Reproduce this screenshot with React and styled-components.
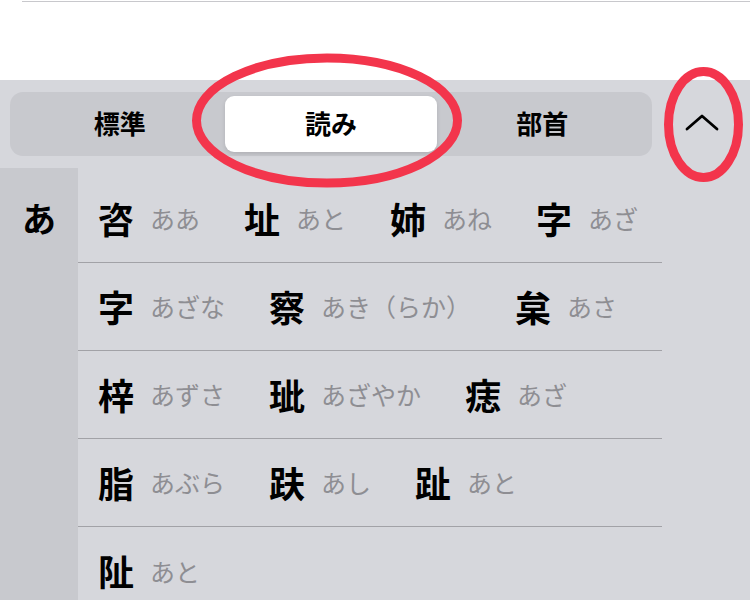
import React from 'react';
import styled, { createGlobalStyle } from 'styled-components';

const GlobalStyle = createGlobalStyle`
	html, body {
		margin: 0;
		padding: 0;
		background: #FFFFFF;
	}
	body {
		font-family: 'Noto Sans CJK JP', 'Noto Sans', sans-serif;
	}
`;

const SEGMENTS = ['標準', '読み', '部首'];
const ACTIVE_SEGMENT = 1;

const ROWS = [
	[['咨', 'ああ'], ['址', 'あと'], ['姉', 'あね'], ['字', 'あざ']],
	[['字', 'あざな'], ['察', 'あき（らか）'], ['枲', 'あさ']],
	[['梓', 'あずさ'], ['玼', 'あざやか'], ['痣', 'あざ']],
	[['脂', 'あぶら'], ['趺', 'あし'], ['趾', 'あと']],
	[['阯', 'あと']],
];

const ChevronUp = () => (
	<svg width='36' height='22' viewBox='0 0 36 22'>
		<path d='M3 18 L18 5 L33 18' fill='none' stroke='#000000' strokeWidth='2.8'
			strokeLinecap='round' strokeLinejoin='round'/>
	</svg>
);

const Annotations = () => (
	<AnnotationLayer width='750' height='600' viewBox='0 0 750 600'>
		<ellipse cx='327' cy='120.5' rx='130.5' ry='62.5' fill='none' stroke='#F3354C' strokeWidth='9'/>
		<ellipse cx='703.5' cy='124.5' rx='35' ry='53' fill='none' stroke='#F3354C' strokeWidth='9'/>
	</AnnotationLayer>
);

export default function App() {
	return (
		<>
			<GlobalStyle/>
			<Page>
				<TopArea>
					<HairLine/>
				</TopArea>
				<Panel>
					<Toolbar>
						<SegmentedControl>
							{SEGMENTS.map((label, i) => (
								<Segment key={label} active={i === ACTIVE_SEGMENT}>{label}</Segment>
							))}
						</SegmentedControl>
						<CollapseButton>
							<ChevronUp/>
						</CollapseButton>
					</Toolbar>
					<Body>
						<IndexColumn>
							<IndexLetter>あ</IndexLetter>
						</IndexColumn>
						<List>
							{ROWS.map((row, r) => (
								<Row key={r} last={r === ROWS.length - 1}>
									{row.map(([kanji, reading]) => (
										<Entry key={kanji + reading}>
											<Kanji>{kanji}</Kanji>
											<Reading>{reading}</Reading>
										</Entry>
									))}
								</Row>
							))}
						</List>
					</Body>
				</Panel>
				<Annotations/>
			</Page>
		</>
	);
}

const Page = styled.div`
	position: relative;
	width: 750px;
	height: 600px;
	overflow: hidden;
	display: flex;
	flex-direction: column;
	background: #FFFFFF;
`;

const TopArea = styled.div`
	height: 80px;
	flex-shrink: 0;
	background: #FFFFFF;
`;

const HairLine = styled.div`
	margin-left: 22px;
	margin-top: 1px;
	height: 1px;
	background: #C8C8CC;
`;

const Panel = styled.div`
	flex: 1;
	display: flex;
	flex-direction: column;
	background: #D6D7DC;
`;

const Toolbar = styled.div`
	height: 88px;
	flex-shrink: 0;
	display: flex;
	align-items: flex-start;
	padding: 12px 0 0 10px;
	box-sizing: border-box;
`;

const SegmentedControl = styled.div`
	width: 642px;
	height: 64px;
	box-sizing: border-box;
	padding: 4px;
	border-radius: 13px;
	background: #C8C9CE;
	display: grid;
	grid-template-columns: repeat(3, 1fr);
`;

const Segment = styled.div`
	display: flex;
	align-items: center;
	justify-content: center;
	border-radius: 9px;
	font-size: 26px;
	font-weight: 600;
	line-height: 1;
	padding-bottom: 2px;
	color: #000000;
	background: ${(p) => (p.active ? '#FFFFFF' : 'transparent')};
	box-shadow: ${(p) => (p.active ? '0 2px 4px rgba(0, 0, 0, 0.12)' : 'none')};
`;

const CollapseButton = styled.div`
	flex: 1;
	height: 64px;
	display: flex;
	align-items: center;
	justify-content: center;
	padding-left: 2px;
	padding-bottom: 4px;
	box-sizing: border-box;
`;

const Body = styled.div`
	flex: 1;
	display: flex;
`;

const IndexColumn = styled.div`
	width: 78px;
	flex-shrink: 0;
	background: #C8C9CE;
	display: flex;
	justify-content: center;
	padding-top: 30px;
	box-sizing: border-box;
`;

const IndexLetter = styled.div`
	font-size: 34px;
	font-weight: 700;
	line-height: 40px;
	height: 40px;
	color: #000000;
`;

const List = styled.div`
	width: 584px;
	padding-top: 7px;
	display: flex;
	flex-direction: column;
`;

const Row = styled.div`
	height: 88px;
	flex-shrink: 0;
	box-sizing: border-box;
	border-bottom: ${(p) => (p.last ? 'none' : '1px solid #A2A2A7')};
	display: flex;
	align-items: center;
	gap: 44px;
	padding-left: 20px;
	padding-bottom: 2px;
`;

const Entry = styled.div`
	display: flex;
	align-items: center;
	gap: 16px;
`;

const Kanji = styled.span`
	font-size: 36px;
	font-weight: 700;
	line-height: 1;
	color: #000000;
`;

const Reading = styled.span`
	font-size: 25px;
	font-weight: 400;
	line-height: 1;
	padding-top: 2px;
	color: #8E8E93;
`;

const AnnotationLayer = styled.svg`
	position: absolute;
	top: 0;
	left: 0;
	pointer-events: none;
`;
